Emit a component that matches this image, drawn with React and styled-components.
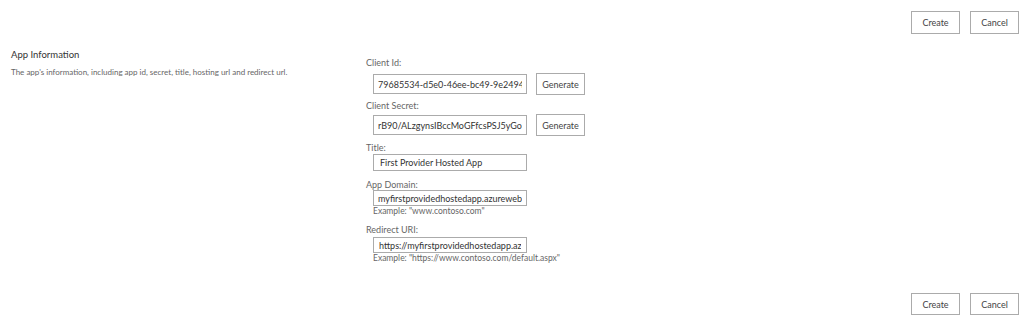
import React from 'react';
import styled, { createGlobalStyle } from 'styled-components';

const Global = createGlobalStyle`
  html, body { margin: 0; padding: 0; background: #fff; }
  body { font-family: Lato, "Open Sans", sans-serif; color: #444; }
  * { box-sizing: border-box; }
`;

const Page = styled.div`
  width: 1024px;
  height: 322px;
  display: flex;
  flex-direction: column;
  overflow: hidden;
`;

const ButtonBar = styled.div`
  display: flex;
  justify-content: flex-end;
  gap: 10px;
  padding: ${p => p.bottom ? '0 5px 0 0' : '11px 5px 0 0'};
  margin-top: ${p => p.bottom ? 'auto' : '0'};
  margin-bottom: ${p => p.bottom ? '7px' : '0'};
`;

const Button = styled.button`
  width: ${p => p.w || 49}px;
  height: ${p => p.h || 23}px;
  padding: 0;
  border: 1px solid #ababab;
  background: #fff;
  color: #444;
  font-family: inherit;
  font-size: 9px;
  cursor: pointer;
`;

const Section = styled.div`
  display: flex;
  margin-top: 14px;
`;

const Intro = styled.div`
  width: 366px;
  padding-left: 11px;
`;

const SectionTitle = styled.h3`
  margin: 0;
  font-size: 9.5px;
  font-weight: 400;
  color: #333;
  line-height: 14px;
`;

const SectionText = styled.p`
  margin: 4px 0 0;
  font-size: 8px;
  color: #666;
  line-height: 12px;
`;

const Fields = styled.div`
  display: flex;
  flex-direction: column;
  margin-top: 8px;
`;

const Field = styled.div`
  display: flex;
  flex-direction: column;
  margin-bottom: ${p => p.gap ?? 4}px;
`;

const Label = styled.label`
  font-size: 9px;
  color: #666;
  line-height: 13px;
  margin-top: ${p => p.nudge ?? 0}px;
`;

const Row = styled.div`
  display: flex;
  align-items: center;
  gap: 9px;
  padding-left: 7px;
  margin-top: ${p => p.top ?? 2}px;
`;

const Input = styled.input`
  width: 154px;
  height: ${p => p.h || 16}px;
  border: 1px solid #ababab;
  padding: 0 ${p => p.pad || 4}px;
  font-family: inherit;
  font-size: 9px;
  color: #333;
  outline: none;
`;

const Hint = styled.div`
  padding-left: 7px;
  font-size: 8.5px;
  color: #666;
  line-height: 11px;
`;

export default function App() {
  return (
    <Page>
      <Global />
      <ButtonBar>
        <Button>Create</Button>
        <Button>Cancel</Button>
      </ButtonBar>
      <Section>
        <Intro>
          <SectionTitle>App Information</SectionTitle>
          <SectionText>The app's information, including app id, secret, title, hosting url and redirect url.</SectionText>
        </Intro>
        <Fields>
          <Field gap={2}>
            <Label>Client Id:</Label>
            <Row top={4}>
              <Input h={20} readOnly value="79685534-d5e0-46ee-bc49-9e249411ab2c" />
              <Button h={22}>Generate</Button>
            </Row>
          </Field>
          <Field gap={3}>
            <Label nudge={2}>Client Secret:</Label>
            <Row top={2}>
              <Input h={20} readOnly value="rB90/ALzgynsIBccMoGFfcsPSJ5yGohPxQ" />
              <Button h={22}>Generate</Button>
            </Row>
          </Field>
          <Field gap={5}>
            <Label nudge={2}>Title:</Label>
            <Row top={0}>
              <Input h={17} readOnly pad={6} value="First Provider Hosted App" />
            </Row>
          </Field>
          <Field gap={5}>
            <Label nudge={2}>App Domain:</Label>
            <Row top={-1}>
              <Input readOnly value="myfirstprovidedhostedapp.azurewebsites.net" />
            </Row>
            <Hint>Example: "www.contoso.com"</Hint>
          </Field>
          <Field>
            <Label nudge={1}>Redirect URI:</Label>
            <Row top={1}>
              <Input readOnly pad={5} value="https://myfirstprovidedhostedapp.azurewebsites.net" />
            </Row>
            <Hint>Example: "https://www.contoso.com/default.aspx"</Hint>
          </Field>
        </Fields>
      </Section>
      <ButtonBar bottom>
        <Button h={22}>Create</Button>
        <Button h={22}>Cancel</Button>
      </ButtonBar>
    </Page>
  );
}
